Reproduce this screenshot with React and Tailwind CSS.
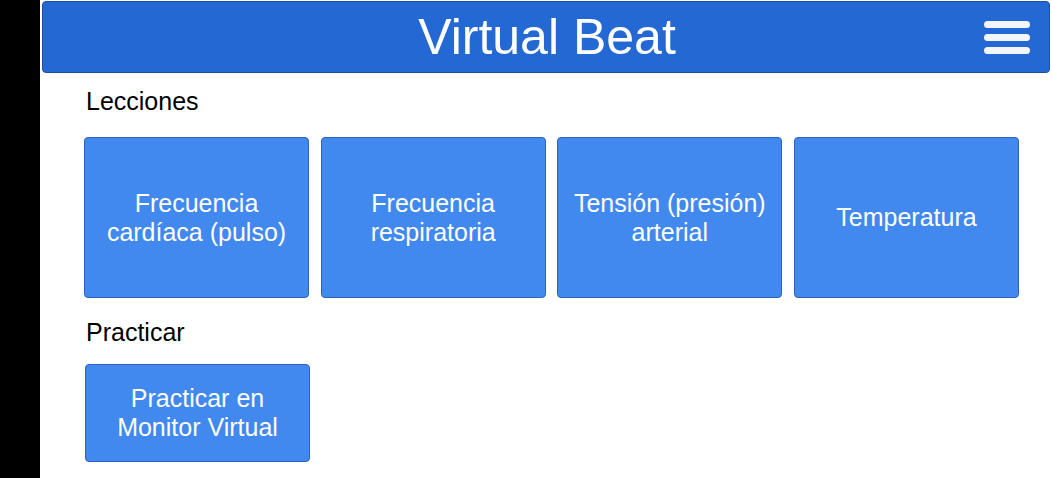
export default function App() {
  const font = { fontFamily: '"Liberation Sans", Arial, sans-serif' };
  const lessons = [
    ["Frecuencia", "cardíaca (pulso)"],
    ["Frecuencia", "respiratoria"],
    ["Tensión (presión)", "arterial"],
    ["Temperatura"],
  ];
  return (
    <div className="flex w-[1052px] h-[478px] overflow-hidden bg-white" style={font}>
      <div className="w-[40px] shrink-0 bg-black" />
      <div className="flex-1 flex flex-col bg-white">
        <header className="mt-[1px] ml-[2px] mr-[2px] h-[72px] shrink-0 rounded-[4px] border border-[#1d4f9e] bg-[#2469d3] flex items-center relative">
          <h1 className="flex-1 text-center text-white text-[50px] leading-none font-normal pl-[2px]">Virtual Beat</h1>
          <div className="absolute right-[19px] top-[19px] flex flex-col gap-[6px]">
            <span className="block w-[46px] h-[7px] rounded-full bg-[#f2f5fb]" />
            <span className="block w-[46px] h-[7px] rounded-full bg-[#f2f5fb]" />
            <span className="block w-[46px] h-[7px] rounded-full bg-[#f2f5fb]" />
          </div>
        </header>
        <div className="pl-[44px] pt-[14px]">
          <div className="ml-[2px] text-[25px] leading-[28px] text-black">Lecciones</div>
          <div className="mt-[22px] grid grid-cols-[repeat(4,225px)] gap-x-[11.67px]">
            {lessons.map((lines, i) => (
              <div
                key={i}
                className="h-[161px] rounded-[4px] border border-[#2d62b8] bg-[#4189ee] flex flex-col items-center justify-center text-white text-[25px] leading-[29px] text-center"
              >
                {lines.map((l, j) => (
                  <span key={j}>{l}</span>
                ))}
              </div>
            ))}
          </div>
          <div className="ml-[2px] mt-[20px] text-[25px] leading-[28px] text-black">Practicar</div>
          <div className="mt-[18px] ml-[1px] w-[225px] h-[98px] rounded-[4px] border border-[#2d62b8] bg-[#4189ee] flex flex-col items-center justify-center text-white text-[25px] leading-[29px] text-center">
            <span>Practicar en</span>
            <span>Monitor Virtual</span>
          </div>
        </div>
      </div>
    </div>
  );
}
